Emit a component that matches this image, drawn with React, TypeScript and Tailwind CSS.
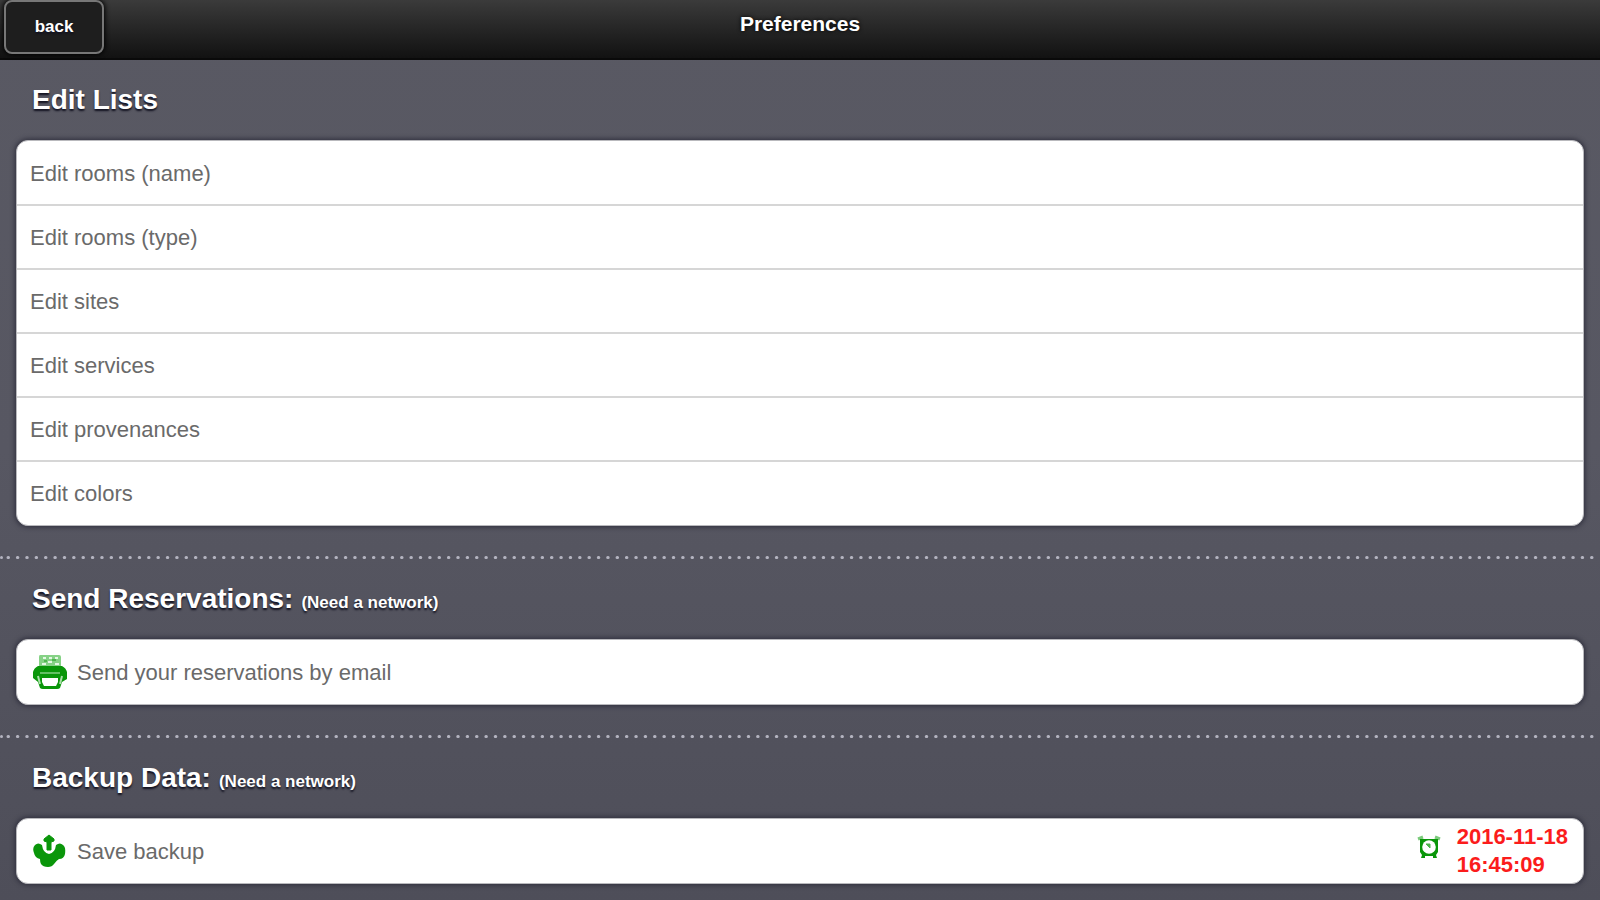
import type { ReactNode } from "react";

const listRows = [
  "Edit rooms (name)",
  "Edit rooms (type)",
  "Edit sites",
  "Edit services",
  "Edit provenances",
  "Edit colors",
];

const textShadow = "[text-shadow:0_2px_2px_#11111f]";

function PrinterIcon() {
  return (
    <svg viewBox="0 0 34 36" className="h-9 w-[34px] shrink-0" aria-hidden="true">
      <path d="M7 1H26Q28 1 28 3V12H6V3Q6 1 7 1Z" fill="#86d286" />
      <path d="M10 4h3M16 4h3M22 4h3M9 10h4M15 8h4M22 10h4" stroke="#e4f8e4" strokeWidth="2" fill="none" />
      <path d="M11 7h3M19 6h4" stroke="#3fae3f" strokeWidth="1.5" fill="none" />
      <path
        d="M5 12H29Q33 14 34 18V25L29 28L27 34Q26 35 24 35H10Q8 35 7 34L5 28L0 24V18Q1 14 5 12Z"
        fill="#0a960a"
      />
      <path d="M7 19H27" stroke="#63c063" strokeWidth="2" />
      <path d="M5 22L7 30M29 22L27 30" stroke="#a9dfa9" strokeWidth="2" />
      <path d="M9 24H25V28L23 32H11L9 28Z" fill="#fff" />
    </svg>
  );
}

function BackupIcon() {
  return (
    <svg viewBox="0 0 34 36" className="h-9 w-[34px] shrink-0" aria-hidden="true">
      <path
        d="M2 12Q5 9 9 12Q10 20 16 21Q22 20 23 12Q27 9 30 12Q33 14 32 21Q31 26 26 26Q24 27 21 31Q19 34 15 34Q10 34 8 31Q7 29 7 26Q2 25 1 20Q-1 15 2 12Z"
        fill="#0a960a"
      />
      <path d="M16 2L21 6V8L18 9V17H14V9L11 8V6Z" fill="#0a960a" stroke="#0a960a" strokeLinejoin="round" />
    </svg>
  );
}

function AlarmIcon() {
  return (
    <svg viewBox="0 0 24 24" className="mt-3 size-6 shrink-0 self-start" aria-hidden="true">
      <path d="M1 4L6 2M23 4L18 2" stroke="#7ccb7c" strokeWidth="3" />
      <path d="M3 4H21V17L19 20L20 23H16V21H8V23H4L5 20L3 17Z" fill="#0a960a" />
      <circle cx="12" cy="12" r="6.8" fill="#fff" />
      <path d="M9 9L13 13V9Z" fill="#4db34d" stroke="#4db34d" />
    </svg>
  );
}

function Divider() {
  return (
    <svg className="mt-[30px] block h-[3px] w-full" aria-hidden="true">
      <circle cx="1.5" cy="1.5" r="1.5" fill="#b4b4c0" />
      <line
        x1="8"
        y1="1.5"
        x2="100%"
        y2="1.5"
        stroke="#b4b4c0"
        strokeWidth="3"
        strokeLinecap="round"
        strokeDasharray="0.5 8.87"
      />
    </svg>
  );
}

function Heading({ children, note }: { children: ReactNode; note?: string }) {
  return (
    <h2 className={`flex h-20 items-center px-4 text-[28px] font-bold text-white ${textShadow}`}>
      <span>
        {children}
        {note && <small className="ml-2 text-[17px]">{note}</small>}
      </span>
    </h2>
  );
}

function Card({ children }: { children: ReactNode }) {
  return (
    <ul className="overflow-hidden rounded-xl border border-[#b9b9bd] bg-white py-px shadow-[0_0_5px_1px_#2e2e3c]">
      {children}
    </ul>
  );
}

function Row({ children }: { children: ReactNode }) {
  return (
    <li className="border-b-2 border-[#d6d6d6] last:border-b-0">
      <button
        type="button"
        className="flex h-[62px] w-full items-center px-[13px] text-left text-[22px] text-[#6a6a6a]"
      >
        {children}
      </button>
    </li>
  );
}

export default function App() {
  return (
    <div className="min-h-screen bg-linear-to-b from-[#595963] via-[#575762] to-[#4e4e59] font-['Liberation_Sans',Arial,sans-serif]">
      <header className="grid h-[60px] grid-cols-[1fr_auto_1fr] items-start border-b-2 border-[#0a0a0a] bg-linear-to-b from-[#3b3b3b] to-[#121212] px-1 text-white">
        <button
          type="button"
          className={`h-[54px] w-[100px] rounded-lg border-2 border-[#777] bg-[#1e1e1e] text-[17px] font-bold shadow-[0_0_5px_1px_#000] ${textShadow}`}
        >
          back
        </button>
        <h1 className="text-[21px] leading-[48px] font-bold [text-shadow:0_0_4px_#000]">Preferences</h1>
      </header>

      <main className="pb-4">
        <section className="px-4">
          <Heading>Edit Lists</Heading>
          <Card>
            {listRows.map((label) => (
              <Row key={label}>{label}</Row>
            ))}
          </Card>
        </section>
        <Divider />
        <section className="px-4">
          <Heading note="(Need a network)">Send Reservations:</Heading>
          <Card>
            <Row>
              <span className="flex items-center gap-[10px] pl-[3px]">
                <PrinterIcon />
                Send your reservations by email
              </span>
            </Row>
          </Card>
        </section>
        <Divider />
        <section className="px-4">
          <Heading note="(Need a network)">Backup Data:</Heading>
          <Card>
            <Row>
              <span className="flex grow items-center gap-[10px] pl-[3px]">
                <BackupIcon />
                Save backup
              </span>
              <span className="flex items-center gap-4 pr-[2px] leading-7 font-bold text-[#fb1c1c]">
                <AlarmIcon />
                <time dateTime="2016-11-18T16:45:09">
                  2016-11-18
                  <br />
                  16:45:09
                </time>
              </span>
            </Row>
          </Card>
        </section>
      </main>
    </div>
  );
}
